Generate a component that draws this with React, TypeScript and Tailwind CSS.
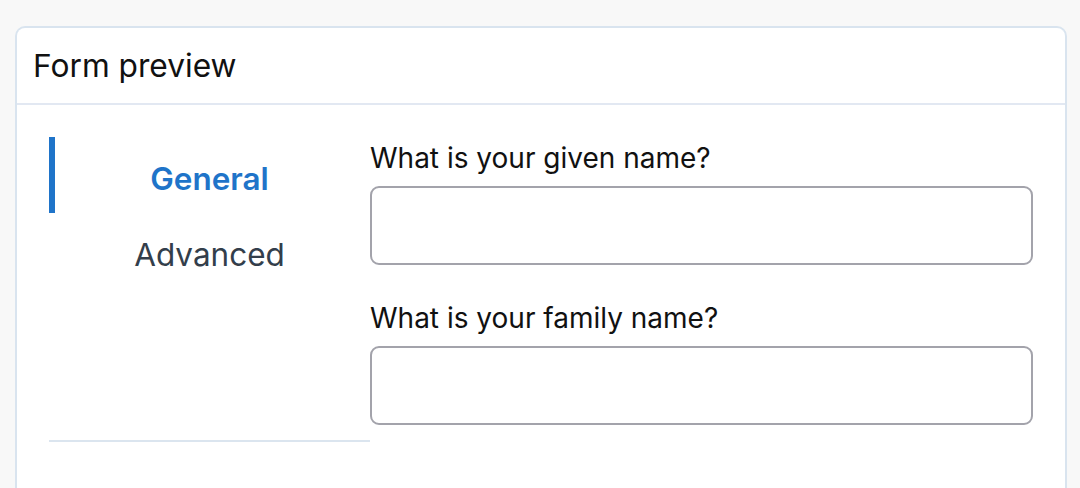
import React from 'react';

const fields = ['What is your given name?', 'What is your family name?'];

export default function App() {
  return (
    <div className="min-h-screen bg-[#f8f8f8] pl-[15px] pr-[13px] pt-[26px] font-['Inter',sans-serif]">
      <div className="rounded-t-[10px] border-2 border-b-0 border-[#d9e4ef] bg-white h-[470px]">
        <div className="h-[77px] border-b-2 border-[#e2e8f2] px-4 flex items-center">
          <h2 className="text-[31.7px] text-[#111]">Form preview</h2>
        </div>
        <div className="flex px-8 pt-8">
          <div className="w-[321px] shrink-0 h-[305px] border-b-2 border-[#dbe5ef] flex flex-col">
            <button className="h-[76px] border-l-[6px] border-[#1f74c9] text-[31.5px] font-semibold text-[#1f74c9] pr-[6px] pt-2">
              General
            </button>
            <button className="h-[76px] text-[31.5px] text-[#333e4b] pt-2">Advanced</button>
          </div>
          <div className="flex-1 flex flex-col gap-[36px] pt-[4px]">
            {fields.map((f) => (
              <label key={f} className="flex flex-col gap-[11px]">
                <span className="text-[28px] text-[#111] leading-[34px]">{f}</span>
                <input className="h-[79px] rounded-[9px] border-2 border-[#a3a3ab] outline-none" />
              </label>
            ))}
          </div>
        </div>
      </div>
    </div>
  );
}
